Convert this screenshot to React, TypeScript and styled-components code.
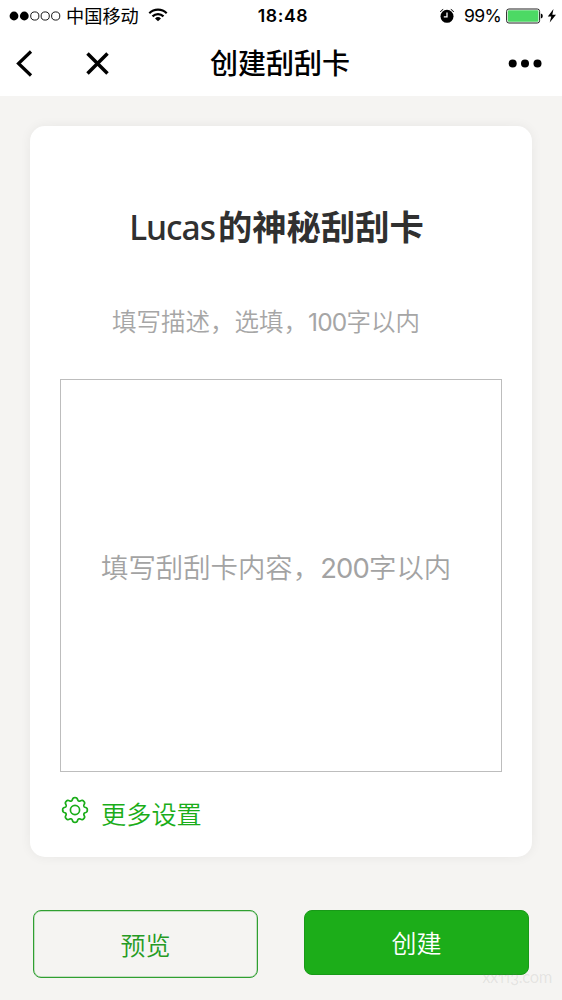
import React from 'react';
import styled, { createGlobalStyle } from 'styled-components';

const GlobalStyle = createGlobalStyle`
  * { box-sizing: border-box; }
  body { margin: 0; background: #f5f4f2; }
`;

const Page = styled.div`
  height: 1000px;
  overflow: hidden;
  position: relative;
  display: flex;
  flex-direction: column;
  background: #f5f4f2;
  font-family: Inter, 'Noto Sans CJK SC', sans-serif;
  color: #000;
`;

const Header = styled.header`
  height: 96px;
  background: #fff;
`;

const StatusBar = styled.div`
  height: 31px;
  display: grid;
  grid-template-columns: 1fr auto 1fr;
  align-items: center;
  padding: 0 5px 0 9px;
  font-size: 18px;
  line-height: 30px;
`;

const StatusGroup = styled.div<{ $end?: boolean }>`
  display: flex;
  align-items: center;
  justify-content: ${(p) => (p.$end ? 'flex-end' : 'flex-start')};
`;

const Carrier = styled.span`
  margin-top: 1px;
  font-size: 18.2px;
`;

const Signal = styled.svg`
  width: 53px;
  height: 12px;
  margin-right: 4px;
`;

const Wifi = styled.svg`
  width: 20px;
  height: 14px;
  margin: 0 0 1px 9px;
`;

const Clock = styled.div`
  font-size: 17.7px;
  font-weight: 600;
  letter-spacing: 0.55px;
`;

const Percent = styled.span`
  font-size: 17.6px;
  letter-spacing: -0.7px;
  margin: 1px 5px 0 9px;
`;

const NavBar = styled.nav`
  height: 65px;
  display: grid;
  grid-template-columns: 1fr auto 1fr;
  align-items: center;
  padding: 0 20px 0 15px;
`;

const NavGroup = styled.div<{ $end?: boolean }>`
  display: flex;
  align-items: center;
  gap: 52px;
  justify-content: ${(p) => (p.$end ? 'flex-end' : 'flex-start')};
`;

const NavTitle = styled.h1`
  margin: 0;
  padding-left: 3px;
  font-size: 28px;
  line-height: 40px;
  font-weight: 500;
`;

const Card = styled.main`
  width: 502px;
  height: 731px;
  margin: 30px auto 0;
  padding: 0 30px;
  border-radius: 15px;
  background: #fff;
  box-shadow: 0 0 12px rgba(0, 0, 0, 0.06);
  display: flex;
  flex-direction: column;
`;

const CardTitle = styled.h2`
  margin: 76px 0 0;
  padding-right: 9px;
  height: 50px;
  line-height: 50px;
  font-family: 'Noto Sans', 'Noto Sans CJK SC', sans-serif;
  font-size: 34.3px;
  font-weight: 700;
  color: #303030;
  text-align: center;
  white-space: nowrap;
`;

const Latin = styled.span`
  font-weight: 500;
  font-size: 33.5px;
  letter-spacing: -1px;
  margin-right: 3px;
`;

const Description = styled.p`
  margin: 50px 0 0;
  padding-left: 52px;
  height: 40px;
  line-height: 40px;
  font-size: 24.5px;
  font-weight: 350;
  color: #a6a6a6;
  white-space: nowrap;
`;

const ContentBox = styled.div`
  height: 393px;
  margin-top: 37px;
  padding: 0 0 19px 40px;
  border: 1px solid #bdbdbd;
  display: flex;
  align-items: center;
  font-size: 27.4px;
  font-weight: 350;
  color: #a3a3a3;
  white-space: nowrap;
`;

const Digits = styled.span`
  font-weight: 400;
  letter-spacing: -0.8px;
`;

const Settings = styled.div`
  display: flex;
  align-items: flex-start;
  margin-top: 24px;
  padding-left: 1px;
  font-size: 25.2px;
  line-height: 38px;
  font-weight: 350;
  color: #1aad19;
  span { margin-left: 12px; }
`;

const Actions = styled.footer`
  display: flex;
  justify-content: space-between;
  align-items: flex-start;
  padding: 53px 33px 0;
`;

const Button = styled.button<{ $primary?: boolean }>`
  width: 225px;
  height: ${(p) => (p.$primary ? 65 : 68)}px;
  padding: 0 0 1px;
  border: 1px solid ${(p) => (p.$primary ? '#189a18' : '#2f9f31')};
  box-shadow: ${(p) => (p.$primary ? 'none' : 'inset 0 0 0 0.5px #2f9f3180')};
  border-radius: 8px;
  background: ${(p) => (p.$primary ? '#1cad19' : 'transparent')};
  color: ${(p) => (p.$primary ? '#fff' : '#259b24')};
  font-family: inherit;
  font-size: 25px;
  font-weight: 350;
`;

const Watermark = styled.div`
  position: absolute;
  right: 10px;
  bottom: 11px;
  font-family: Lato, sans-serif;
  font-size: 16.5px;
  line-height: 24px;
  letter-spacing: -0.3px;
  font-feature-settings: 'onum', 'pnum';
  color: rgba(120, 120, 120, 0.14);
`;

const gearOutline = (() => {
  const points: string[] = [];
  for (let i = 0; i < 192; i++) {
    const a = (i / 192) * Math.PI * 2;
    const r = 10.9 + 1.5 * Math.tanh(1.5 * Math.cos(8 * a) + 0.4);
    points.push(`${(14 + r * Math.cos(a)).toFixed(2)} ${(14 + r * Math.sin(a)).toFixed(2)}`);
  }
  return `M${points.join('L')}Z`;
})();

export default function App() {
  return (
    <Page>
      <GlobalStyle />
      <Header>
        <StatusBar>
          <StatusGroup>
            <Signal viewBox="0 0 53 12">
              {[5, 15.3, 25.8, 36.2, 46.7].map((x, i) => (
                <circle key={x} cx={x} cy="6" r={i < 2 ? 4.4 : 4.1} fill={i < 2 ? '#000' : 'none'} stroke={i < 2 ? 'none' : '#000'} strokeWidth="0.9" />
              ))}
            </Signal>
            <Carrier>中国移动</Carrier>
            <Wifi viewBox="0 0 20 14" fill="none" stroke="#000" strokeWidth="2.2">
              <path d="M1.3 5.2a12.4 12.4 0 0 1 17.4 0M4.5 8.4a7.8 7.8 0 0 1 11 0" />
              <path d="M10 13.3 7 10.4a4.3 4.3 0 0 1 6 0z" fill="#000" stroke="none" />
            </Wifi>
          </StatusGroup>
          <Clock>18:48</Clock>
          <StatusGroup $end>
            <svg width="16" height="16" viewBox="0 0 16 16">
              <circle cx="8" cy="8.3" r="6.5" />
              <path d="M1.4 4Q2.2 2 4.2 1.4M14.6 4Q13.8 2 11.8 1.4" fill="none" stroke="#000" strokeWidth="1" />
              <path d="M8 4.5v4.3H4.8" fill="none" stroke="#fff" strokeWidth="1.3" />
            </svg>
            <Percent>99%</Percent>
            <svg width="38" height="16" viewBox="0 0 38 16">
              <rect x="0.6" y="1" width="33" height="14" rx="2.3" fill="#fff" stroke="#222" strokeWidth="1" />
              <rect x="1.8" y="2.2" width="30.6" height="11.6" rx="1.2" fill="#4cd964" />
              <path d="M34.8 5.5q2 .4 2 2.5t-2 2.5z" />
            </svg>
            <svg width="10" height="14" viewBox="0 0 10 14" style={{ marginLeft: 3 }}>
              <path d="M6.5 0 .8 7.5h3.5L2.7 13.5 9 5.8H5.3z" />
            </svg>
          </StatusGroup>
        </StatusBar>
        <NavBar>
          <NavGroup>
            <svg width="18" height="28" viewBox="0 0 18 28" fill="none" stroke="#000" strokeWidth="3.2">
              <path d="M16 1.5 3.5 13.5 16 25.5" />
            </svg>
            <svg width="25" height="25" viewBox="0 0 25 25" fill="none" stroke="#000" strokeWidth="3.5">
              <path d="m2.5 2.5 20 20M22.5 2.5l-20 20" />
            </svg>
          </NavGroup>
          <NavTitle>创建刮刮卡</NavTitle>
          <NavGroup $end>
            <svg width="34" height="10" viewBox="0 0 34 10">
              <circle cx="4.7" cy="4.5" r="4" />
              <circle cx="17" cy="4.5" r="4" />
              <circle cx="29.5" cy="4.5" r="4" />
            </svg>
          </NavGroup>
        </NavBar>
      </Header>
      <Card>
        <CardTitle><Latin>Lucas</Latin>的神秘刮刮卡</CardTitle>
        <Description>填写描述，选填，<Digits>100</Digits>字以内</Description>
        <ContentBox><div>填写刮刮卡内容，<Digits>200</Digits>字以内</div></ContentBox>
        <Settings>
          <svg width="28" height="28" viewBox="0 0 28 28" fill="none" stroke="#1aad19" strokeWidth="1.7">
            <path d={gearOutline} />
            <circle cx="14" cy="14" r="4.6" />
          </svg>
          <span>更多设置</span>
        </Settings>
      </Card>
      <Actions>
        <Button>预览</Button>
        <Button $primary>创建</Button>
      </Actions>
      <Watermark>xx113.com</Watermark>
    </Page>
  );
}
